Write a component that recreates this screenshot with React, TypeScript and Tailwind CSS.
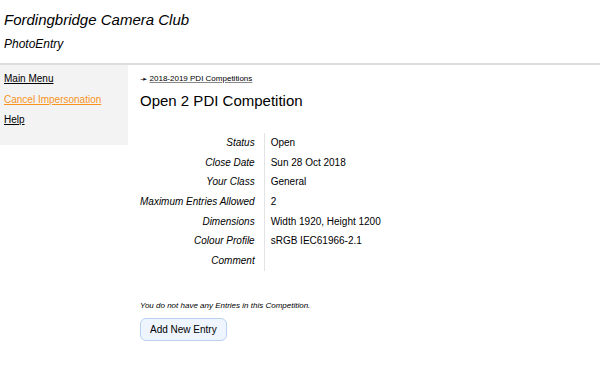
export default function App() {
  const rows: [string, string][] = [
    ["Status", "Open"],
    ["Close Date", "Sun 28 Oct 2018"],
    ["Your Class", "General"],
    ["Maximum Entries Allowed", "2"],
    ["Dimensions", "Width 1920, Height 1200"],
    ["Colour Profile", "sRGB IEC61966-2.1"],
    ["Comment", ""],
  ];

  return (
    <div className="min-h-[385px] bg-white text-black font-['Liberation_Sans',Arial,sans-serif]">
      <header className="h-[63px] px-1 pt-[11px]">
        <div className="italic text-[15px] leading-[18px]">Fordingbridge Camera Club</div>
        <div className="italic text-[12px] leading-[14px] mt-[8px]">PhotoEntry</div>
      </header>
      <div className="h-[2px] bg-[#dcdcdc]" />

      <div className="flex">
        <nav className="w-[128px] h-[80px] bg-[#f3f3f3] px-1 pt-[4px] text-[10px] leading-[20.5px] flex flex-col items-start">
          <a href="#" className="underline text-black">Main Menu</a>
          <a href="#" className="underline text-[#f7931e]">Cancel Impersonation</a>
          <a href="#" className="underline text-black">Help</a>
        </nav>

        <main className="ml-3 pt-[10px]">
          <div className="text-[8px] leading-[8px] flex items-center gap-[2px]">
            <span className="text-[9px] leading-[8px] font-['DejaVu_Sans',sans-serif]">➛</span>
            <a href="#" className="underline decoration-[#888] text-black">2018-2019 PDI Competitions</a>
          </div>
          <h1 className="text-[15px] leading-[18px] mt-[9px]">Open 2 PDI Competition</h1>

          <table className="mt-[23px] text-[10px] leading-[11.67px] border-collapse">
            <tbody>
              {rows.map(([label, value]) => (
                <tr key={label}>
                  <td className="w-[124px] text-right italic pr-[9px] py-[4px] whitespace-nowrap">{label}</td>
                  <td className="pl-[6px] py-[4px] border-l border-[#e3e3e3] whitespace-nowrap">{value}</td>
                </tr>
              ))}
            </tbody>
          </table>

          <p className="italic text-[8px] leading-[10px] mt-[30px]">
            You do not have any Entries in this Competition.
          </p>
          <button className="mt-[7px] h-[23px] px-[9px] text-[10px] rounded-[6px] border border-[#b9d2f2] bg-[#eef5fe] text-black">
            Add New Entry
          </button>
        </main>
      </div>
    </div>
  );
}
